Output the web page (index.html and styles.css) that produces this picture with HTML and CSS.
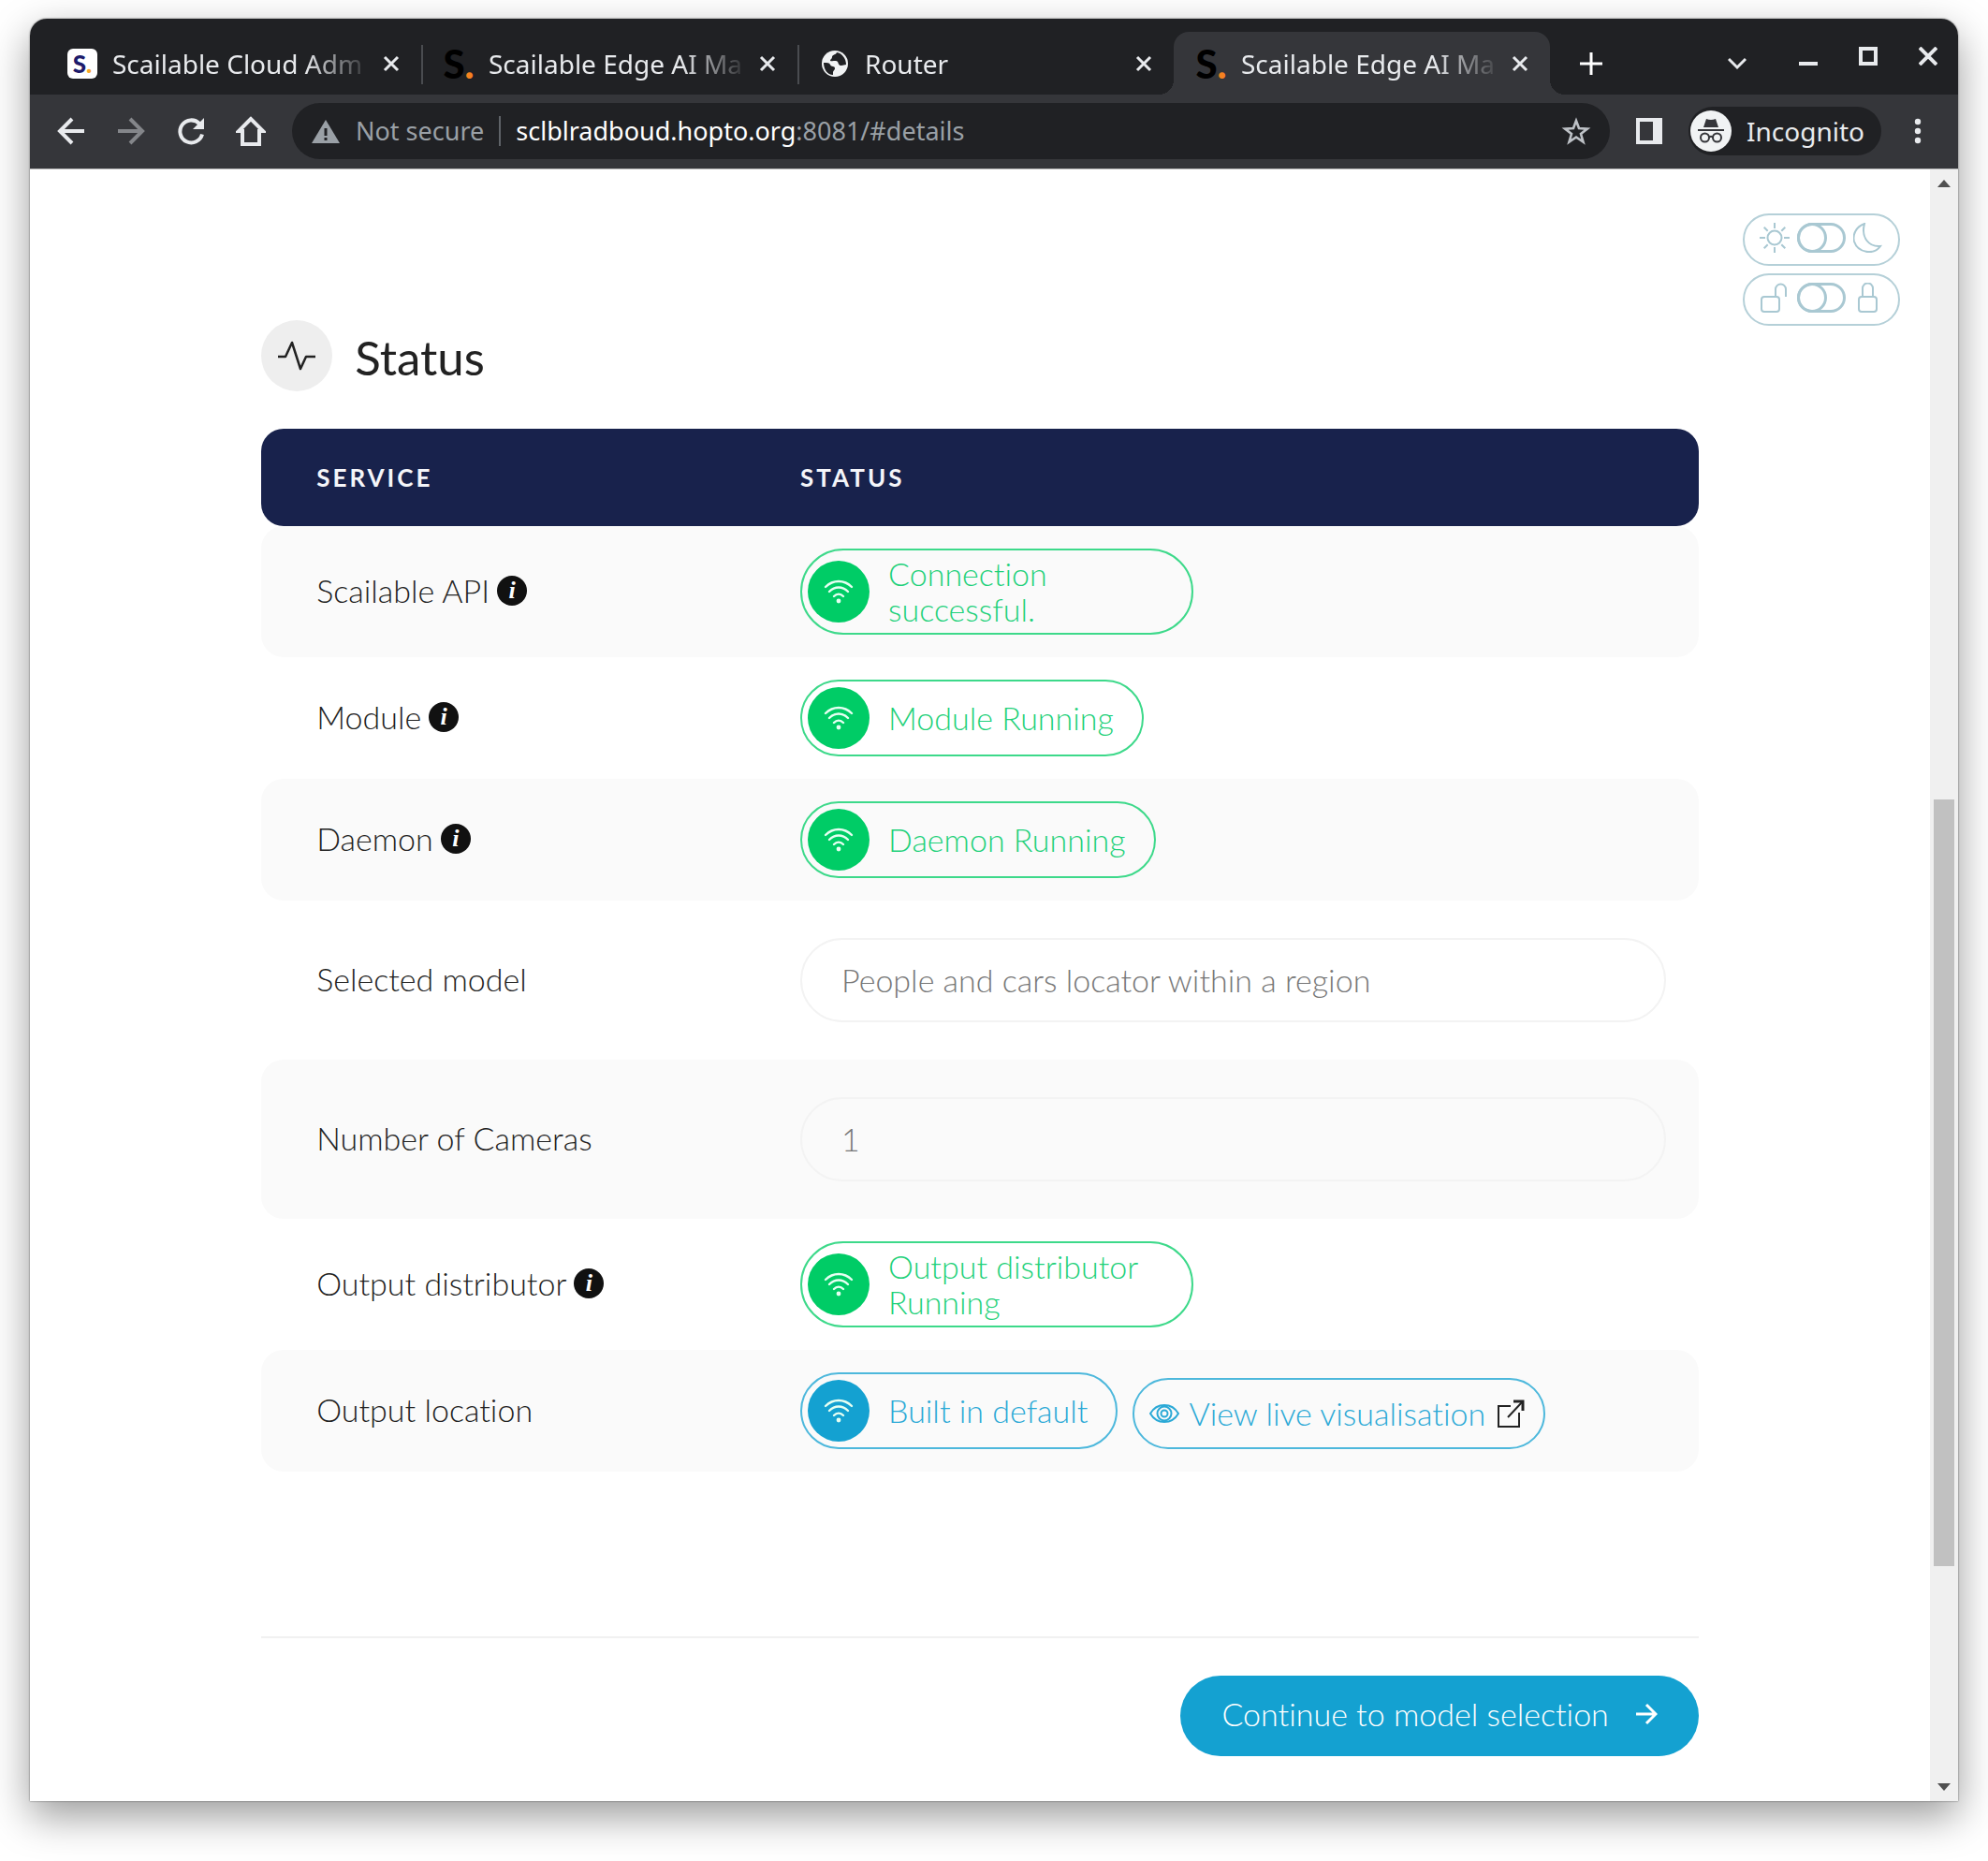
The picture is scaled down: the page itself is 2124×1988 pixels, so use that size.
FILE: index.html
```html
<!DOCTYPE html>
<html lang="en">
<head>
<meta charset="utf-8">
<title>Scailable Edge AI Manager</title>
<link rel="stylesheet" href="styles.css">
</head>
<body>
<svg class="defs" aria-hidden="true">
  <symbol id="close" viewBox="0 0 20 20"><path d="M3 3l14 14M17 3L3 17" fill="none" stroke="currentColor" stroke-width="3"/></symbol>
  <symbol id="wifi" viewBox="0 0 32 28"><g fill="none" stroke="currentColor" stroke-width="2.400" stroke-linecap="round"><path d="M2 9C10 1 22 1 30 9M6 14c6-6 14-6 20 0M11 19c3-3 7-3 10 0"/></g><circle cx="16" cy="24" r="2.400" fill="currentColor"/></symbol>
</svg>
<div class="window">
  <header class="tabstrip">
    <div class="tab">
      <span class="favicon favicon-light">S<b>.</b></span>
      <span class="tab-title">Scailable Cloud Adm</span>
      <button class="icon-btn" aria-label="Close tab"><svg class="i20"><use href="#close"/></svg></button>
    </div>
    <div class="tab tab-split">
      <span class="favicon">S<b>.</b></span>
      <span class="tab-title">Scailable Edge AI Ma</span>
      <button class="icon-btn" aria-label="Close tab"><svg class="i20"><use href="#close"/></svg></button>
    </div>
    <div class="tab tab-split">
      <svg class="favicon" viewBox="0 0 32 32"><circle cx="16" cy="16" r="14" fill="#f1f3f4"/><path d="M4 15c4 0 6 0 7 2 1 3 5 1 5 4 0 2-2 2-2 5v2C8 28 4 22 4 15zM18 4c-1 3-5 2-5 5 0 2-2 2-2 4 3 1 6-1 8 1 1 2 1 4 4 4 2 0 3-1 5-1 0-6-4-12-10-13z" fill="#202124"/></svg>
      <span class="tab-title">Router</span>
      <button class="icon-btn" aria-label="Close tab"><svg class="i20"><use href="#close"/></svg></button>
    </div>
    <div class="tab tab-active">
      <span class="favicon">S<b>.</b></span>
      <span class="tab-title">Scailable Edge AI Ma</span>
      <button class="icon-btn" aria-label="Close tab"><svg class="i20"><use href="#close"/></svg></button>
    </div>
    <button class="icon-btn new-tab" aria-label="New tab"><svg class="i24" viewBox="0 0 24 24"><path d="M12 0v24M0 12h24" stroke="currentColor" stroke-width="3"/></svg></button>
    <div class="window-controls">
      <button class="icon-btn low search-tabs" aria-label="Search tabs"><svg class="i20" viewBox="0 0 20 20"><path d="M1 5l9 9 9-9" fill="none" stroke="currentColor" stroke-width="3"/></svg></button>
      <button class="icon-btn low" aria-label="Minimise"><svg class="i20" viewBox="0 0 20 20"><path d="M0 10h20" stroke="currentColor" stroke-width="4"/></svg></button>
      <button class="icon-btn" aria-label="Maximise"><svg class="i20" viewBox="0 0 20 20"><path d="M2 2h16v16H2z" fill="none" stroke="currentColor" stroke-width="4"/></svg></button>
      <button class="icon-btn" aria-label="Close window"><svg class="i20" viewBox="0 0 20 20"><path d="M1 1l18 18M19 1L1 19" stroke="currentColor" stroke-width="4"/></svg></button>
    </div>
  </header>

  <nav class="toolbar">
    <button class="icon-btn nav-btn" aria-label="Back"><svg class="i32" viewBox="0 0 32 32"><path d="M30 16H4M17 3L4 16l13 13" fill="none" stroke="currentColor" stroke-width="4"/></svg></button>
    <button class="icon-btn nav-btn dim" aria-label="Forward"><svg class="i32" viewBox="0 0 32 32"><path d="M2 16h26M15 3l13 13-13 13" fill="none" stroke="currentColor" stroke-width="4"/></svg></button>
    <button class="icon-btn nav-btn" aria-label="Reload"><svg class="i32" viewBox="0 0 32 32"><path d="M28 19.500A12 12 0 1 1 25 8" fill="none" stroke="currentColor" stroke-width="4"/><path d="M30 2v12H18z" fill="currentColor"/></svg></button>
    <button class="icon-btn nav-btn" aria-label="Home"><svg class="i32" viewBox="0 0 32 32"><path d="M16 3L3 16h4v14h18V16h4z" fill="none" stroke="currentColor" stroke-width="4"/></svg></button>
    <div class="omnibox">
      <svg class="i32" viewBox="0 0 32 32"><path d="M16 4l15 25H1z" fill="#9aa0a6"/><path d="M16 13v8M16 23v3" stroke="#202124" stroke-width="3"/></svg>
      <span class="secure">Not secure</span>
      <span class="url" role="textbox" aria-label="Address">sclblradboud.hopto.org<span class="url-rest">:8081/#details</span></span>
      <button class="icon-btn star" aria-label="Bookmark"><svg class="i32" viewBox="0 0 32 32"><path d="M16 5l3 8 9 .6-7 5.500 2.500 8.500L16 22.500 8.500 27.600 11 19.100 4 13.600 13 13z" fill="none" stroke="currentColor" stroke-width="2.600"/></svg></button>
    </div>
    <button class="icon-btn panel" aria-label="Side panel"><svg class="i32" viewBox="0 0 32 32"><path d="M2 2h28v28H2zM6 6v20h14V6z" fill="currentColor" fill-rule="evenodd"/></svg></button>
    <div class="incognito">
      <svg class="avatar" viewBox="0 0 44 44"><circle cx="22" cy="22" r="22" fill="#f1f3f4"/><path d="M14 18l3-9q5 2 10 0l3 9z" fill="#35363a"/><g fill="none" stroke="#35363a" stroke-width="2"><path d="M8 21h28"/><circle cx="15.500" cy="29" r="4.500"/><circle cx="28.500" cy="29" r="4.500"/><path d="M20 28.500q2-1.500 4 0"/></g></svg>
      <span>Incognito</span>
    </div>
    <button class="icon-btn menu" aria-label="Menu"><svg class="i32" viewBox="0 0 32 32" fill="currentColor"><circle cx="16" cy="6" r="3.200"/><circle cx="16" cy="16" r="3.200"/><circle cx="16" cy="26" r="3.200"/></svg></button>
  </nav>

  <div class="viewport">
    <main class="page">
      <div class="switches">
        <label class="switch" aria-label="Dark mode">
          <svg class="i32" viewBox="0 0 32 32" fill="none" stroke="currentColor" stroke-width="2"><circle cx="16" cy="16" r="7.500"/><path d="M16 0v6M16 26v6M0 16h6M26 16h6M4.700 4.700l4 4M23.300 23.300l4 4M4.700 27.300l4-4M23.300 8.700l4-4"/></svg>
          <input type="checkbox">
          <svg class="i32" viewBox="0 0 32 32" fill="none" stroke="currentColor" stroke-width="2"><path d="M12 1C3 4-1 13 1 20c4 12 21 15 28 5C17 26 8 16 12 1z"/></svg>
        </label>
        <label class="switch" aria-label="Lock">
          <svg class="i32" viewBox="0 0 32 32" fill="none" stroke="currentColor" stroke-width="2"><rect x="2" y="15" width="19" height="16" rx="3"/><path d="M17 15V7a5 5 0 0 1 11 0v8"/></svg>
          <input type="checkbox">
          <svg class="i32" viewBox="0 0 32 32" fill="none" stroke="currentColor" stroke-width="2"><rect x="6" y="15" width="19" height="16" rx="3"/><path d="M10 15V6a5 5 0 0 1 11 0v9"/></svg>
        </label>
      </div>

      <div class="heading">
        <span class="heading-icon"><svg viewBox="0 0 40 40" fill="none" stroke="#222" stroke-width="2.500" stroke-linejoin="round"><path d="M0 21h8L15 6l9 28 6-13h10"/></svg></span>
        <h1>Status</h1>
      </div>

      <table>
        <thead><tr><th scope="col">Service</th><th scope="col">Status</th></tr></thead>
        <tbody>
          <tr>
            <td><span class="label">Scailable API<span class="info">i</span></span></td>
            <td><span class="pill"><span class="dot"><svg class="i32"><use href="#wifi"/></svg></span>Connection successful.</span></td>
          </tr>
          <tr>
            <td><span class="label">Module<span class="info">i</span></span></td>
            <td><span class="pill"><span class="dot"><svg class="i32"><use href="#wifi"/></svg></span>Module Running</span></td>
          </tr>
          <tr>
            <td><span class="label">Daemon<span class="info">i</span></span></td>
            <td><span class="pill"><span class="dot"><svg class="i32"><use href="#wifi"/></svg></span>Daemon Running</span></td>
          </tr>
          <tr class="tall">
            <td><label class="label" for="model">Selected model</label></td>
            <td><input class="field" id="model" type="text" value="People and cars locator within a region" disabled></td>
          </tr>
          <tr class="tall">
            <td><label class="label" for="cameras">Number of Cameras</label></td>
            <td><input class="field" id="cameras" type="text" value="1" disabled></td>
          </tr>
          <tr>
            <td><span class="label">Output distributor<span class="info">i</span></span></td>
            <td><span class="pill"><span class="dot"><svg class="i32"><use href="#wifi"/></svg></span>Output distributor Running</span></td>
          </tr>
          <tr>
            <td><span class="label">Output location</span></td>
            <td><div class="outputs">
              <span class="pill blue"><span class="dot"><svg class="i32"><use href="#wifi"/></svg></span>Built in default</span>
              <a class="view" href="#live"><svg class="i32" viewBox="0 0 32 32" fill="none" stroke="currentColor" stroke-width="2"><path d="M1 16C8 4 24 4 31 16 24 28 8 28 1 16z"/><circle cx="16" cy="16" r="7.500"/><circle cx="16" cy="16" r="3.500"/></svg>View live visualisation<svg class="i32 ext" viewBox="0 0 32 32" fill="none" stroke="#222" stroke-width="2"><path d="M17 8H4v22h22V15M14 20L29 4"/><path d="M20 3h10v10" stroke-width="3"/></svg></a>
            </div></td>
          </tr>
        </tbody>
      </table>

      <footer class="actions">
        <button class="primary">Continue to model selection<svg class="i24" viewBox="0 0 24 24"><path d="M1 12h20M12 2l10 10-10 10" fill="none" stroke="currentColor" stroke-width="3"/></svg></button>
      </footer>
    </main>
    <div class="scrollbar" aria-hidden="true">
      <svg class="arrow" viewBox="0 0 30 30"><path d="M8 19l7-8 7 8z" fill="#505050"/></svg>
      <span class="track-above"></span><span class="thumb"></span><span class="track-below"></span>
      <svg class="arrow" viewBox="0 0 30 30"><path d="M8 11l7 8 7-8z" fill="#505050"/></svg>
    </div>
  </div>
</div>
</body>
</html>
```
FILE: styles.css
```css
* { box-sizing: border-box; }

body {
  margin: 0;
  min-height: 100vh;
  padding: 20px 32px 64px;
  background: #fff;
  font-family: Lato, "Open Sans", sans-serif;
  font-weight: 300;
  font-size: 34px;
  line-height: 38px;
  font-variant-ligatures: none;
  color: #222;
  display: flex;
  flex-direction: column;
  overflow-x: hidden;
}

button { font: inherit; color: inherit; border: 0; padding: 0; background: none; }
svg { display: block; flex: none; }
.defs { position: absolute; width: 0; height: 0; }
.i20 { width: 20px; height: 20px; }
.i24 { width: 24px; height: 24px; }
.i32 { width: 32px; height: 32px; }

.window {
  flex: 1;
  display: flex;
  flex-direction: column;
  border-radius: 18px 18px 0 0;
  box-shadow: 0 0 2px rgba(0, 0, 0, .6), 0 16px 44px rgba(0, 0, 0, .4);
}

/* Browser chrome */
.tabstrip, .toolbar {
  font-family: "Noto Sans", sans-serif;
  font-weight: 400;
  line-height: 36px;
  color: #e8eaed;
}
.tabstrip {
  height: 81px;
  padding: 14px 22px 0 16px;
  display: flex;
  font-size: 28px;
  background: #202124;
  border-radius: 18px 18px 0 0;
}
.tab {
  flex: 0 1 402px;
  min-width: 0;
  padding: 0 22px 0 24px;
  display: flex;
  align-items: center;
  position: relative;
}
.tab-split::before {
  content: "";
  position: absolute;
  left: 0;
  top: 14px;
  width: 2px;
  height: 42px;
  background: #4a4c50;
}
.tab-active { background: #35363a; border-radius: 16px 16px 0 0; }
.tab-active::before, .tab-active::after {
  content: "";
  position: absolute;
  bottom: 0;
  width: 16px;
  height: 16px;
}
.tab-active::before { right: 100%; background: radial-gradient(circle at 0 0, #202124 16px, #35363a 16px); }
.tab-active::after { left: 100%; background: radial-gradient(circle at 100% 0, #202124 16px, #35363a 16px); }
.favicon {
  flex: none;
  width: 32px;
  height: 32px;
  border-radius: 6px;
  font: 900 42px/32px Lato, sans-serif;
  color: #000;
  display: flex;
  justify-content: center;
}
.favicon b { color: #f58220; }
.favicon-light { background: #fff; color: #1d1b6b; font-size: 26px; }
.favicon-light b { color: #f9a826; }
.tab-title {
  flex: 1;
  margin: 0 10px 0 16px;
  overflow: hidden;
  white-space: nowrap;
  mask-image: linear-gradient(to right, #000 calc(100% - 72px), transparent);
}
.icon-btn { flex: none; display: flex; align-items: center; justify-content: center; }
.new-tab { width: 88px; color: #fff; }
.window-controls { margin-left: auto; display: flex; gap: 44px; align-items: flex-start; padding-top: 16px; }
.window-controls .low { margin-top: 8px; }
.window-controls .search-tabs { margin-right: 12px; }

.toolbar {
  height: 80px;
  padding: 0 4px 2px 12px;
  display: flex;
  align-items: center;
  font-size: 27px;
  background: #35363a;
  border-bottom: 1px solid #b8b8b8;
}
.nav-btn { width: 64px; height: 60px; }
.dim { color: #84868a; }
.omnibox {
  flex: 1;
  height: 60px;
  margin-left: 12px;
  padding: 0 20px;
  display: flex;
  align-items: center;
  border-radius: 30px;
  background: #202124;
}
.secure { color: #9aa0a6; margin-left: 16px; padding-right: 16px; }
.url { flex: 1; padding-left: 16px; line-height: 32px; border-left: 2px solid #5f6368; color: #fff; }
.url-rest { color: #9aa0a6; }
.star { color: #bdc1c6; }
.panel { width: 84px; }
.incognito {
  height: 52px;
  padding: 0 18px 0 2px;
  display: flex;
  align-items: center;
  gap: 16px;
  font-size: 28px;
  border-radius: 26px;
  background: #202124;
}
.avatar { width: 44px; height: 44px; }
.menu { width: 78px; }

/* Page */
.viewport { flex: 1; display: flex; background: #fff; }
.page { flex: 1; min-width: 0; position: relative; padding: 161px 12% 48px; }

.switches { position: absolute; top: 47px; right: 32px; display: grid; gap: 8px; color: #a9c8d2; }
.switch {
  width: 168px;
  height: 56px;
  padding: 0 16px 4px;
  display: flex;
  align-items: center;
  justify-content: space-between;
  border: 2px solid #b5d0d8;
  border-radius: 28px;
}
.switch input {
  appearance: none;
  margin: 0;
  width: 52px;
  height: 32px;
  border: 3px solid #a9c8d2;
  border-radius: 16px;
}
.switch input::before {
  content: "";
  display: block;
  box-sizing: border-box;
  width: 32px;
  height: 32px;
  margin: -3px;
  border: 3px solid #a9c8d2;
  border-radius: 50%;
}

.heading { display: flex; align-items: center; gap: 24px; margin-bottom: 40px; }
.heading-icon {
  width: 76px;
  height: 76px;
  display: grid;
  place-items: center;
  border-radius: 50%;
  background: #eee;
}
.heading-icon svg { width: 40px; height: 40px; }
h1 { margin: 0; padding-top: 4px; font-size: 51px; line-height: 60px; font-weight: 400; }

table { width: 100%; table-layout: fixed; border-collapse: separate; border-spacing: 0; }
th {
  height: 104px;
  padding: 0;
  text-align: left;
  text-transform: uppercase;
  font-size: 26px;
  font-weight: 700;
  letter-spacing: 3px;
  color: #f4f5f9;
  background: #18224c;
}
th:first-child, td:first-child { width: 37.5%; padding-left: 59px; border-radius: 24px 0 0 24px; }
th:last-child, td:last-child { border-radius: 0 24px 24px 0; }
td { padding: 24px 35px 24px 0; vertical-align: middle; }
.tall td { padding-top: 40px; padding-bottom: 40px; }
tbody tr:nth-child(odd) td { background: #fafafa; }
.label { display: flex; align-items: center; gap: 8px; padding-bottom: 2px; }

.info {
  flex: none;
  width: 32px;
  height: 32px;
  border-radius: 50%;
  background: #111;
  color: #fff;
  text-align: center;
  font: italic bold 26px/32px "Liberation Serif", serif;
}

.pill {
  display: flex;
  align-items: center;
  gap: 20px;
  width: fit-content;
  max-width: 420px;
  padding: 6px 30px 6px 6px;
  border: 2px solid #3dd98a;
  border-radius: 46px;
  color: #1fd17a;
}
.dot {
  flex: none;
  width: 66px;
  height: 66px;
  display: grid;
  place-items: center;
  border-radius: 50%;
  background: #00cc66;
  color: #e6fff2;
}
.blue { border-color: #4db8dc; color: #2ba9d6; }
.blue .dot { background: #14a1d1; }
.outputs { display: flex; flex-wrap: wrap; align-items: flex-end; gap: 16px; }
.view {
  height: 76px;
  padding: 0 20px 0 16px;
  display: flex;
  align-items: center;
  gap: 10px;
  border: 2px solid #4db8dc;
  border-radius: 38px;
  color: #2ba9d6;
  text-decoration: none;
}
.field {
  display: block;
  width: 100%;
  height: 90px;
  padding: 0 42px 2px;
  border: 2px solid #f3f3f3;
  border-radius: 45px;
  background: transparent;
  font: inherit;
  font-variant-ligatures: none;
  color: #777;
}

.actions { margin-top: 176px; padding-top: 40px; border-top: 2px solid #f1f1f1; display: flex; justify-content: flex-end; }
.primary {
  height: 86px;
  padding: 0 44px 4px;
  display: flex;
  align-items: center;
  gap: 28px;
  border-radius: 43px;
  background: #14a1d1;
  color: #fff;
  font-variant-ligatures: none;
}

.scrollbar { flex: none; width: 30px; display: flex; flex-direction: column; background: #f0f0f0; }
.arrow { width: 30px; height: 30px; }
.track-above { flex: 644; }
.thumb { flex: 820; margin: 0 4px; background: #c1c1c1; }
.track-below { flex: 221; }
```
